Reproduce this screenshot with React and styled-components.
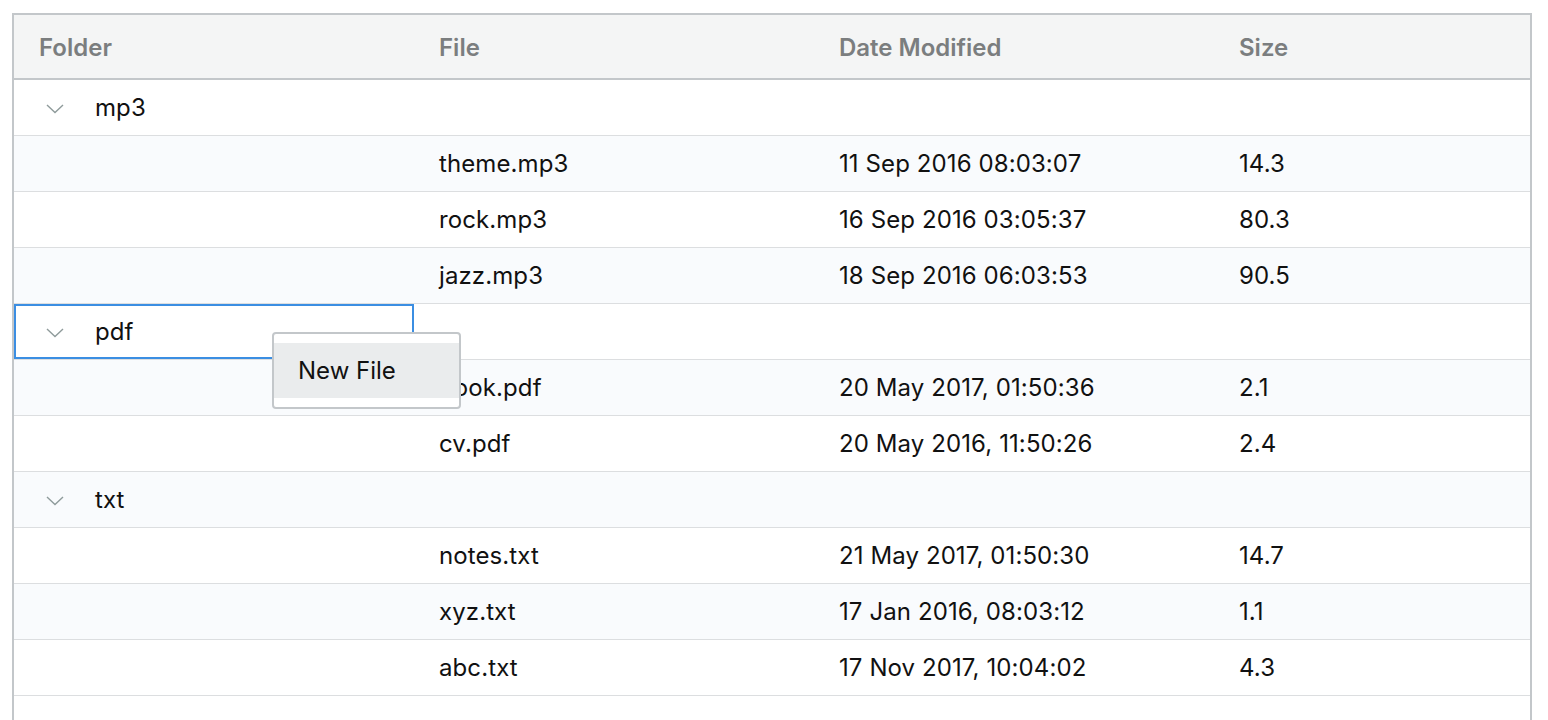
import React from "react";
import styled, { createGlobalStyle } from "styled-components";

const folders = [
  {
    name: "mp3",
    files: [
      { name: "theme.mp3", date: "11 Sep 2016 08:03:07", size: "14.3" },
      { name: "rock.mp3", date: "16 Sep 2016 03:05:37", size: "80.3" },
      { name: "jazz.mp3", date: "18 Sep 2016 06:03:53", size: "90.5" },
    ],
  },
  {
    name: "pdf",
    focused: true,
    files: [
      { name: "book.pdf", date: "20 May 2017, 01:50:36", size: "2.1" },
      { name: "cv.pdf", date: "20 May 2016, 11:50:26", size: "2.4" },
    ],
  },
  {
    name: "txt",
    files: [
      { name: "notes.txt", date: "21 May 2017, 01:50:30", size: "14.7" },
      { name: "xyz.txt", date: "17 Jan 2016, 08:03:12", size: "1.1" },
      { name: "abc.txt", date: "17 Nov 2017, 10:04:02", size: "4.3" },
    ],
  },
];

const Chevron = () => (
  <svg width="18" height="10" viewBox="0 0 18 10">
    <path d="M1 1 L9 8.5 L17 1" fill="none" stroke="#8f9b9b" strokeWidth="1.4" />
  </svg>
);

const App = () => {
  return (
    <>
      <GlobalStyle />
      <Table>
        <Header>
          <HeadCell>Folder</HeadCell>
          <HeadCell>File</HeadCell>
          <HeadCell>Date Modified</HeadCell>
          <HeadCell>Size</HeadCell>
        </Header>
        <Body>
          {folders.map((folder) => (
            <React.Fragment key={folder.name}>
              <Row>
                <FolderCell focused={folder.focused}>
                  <Chevron />
                  <span>{folder.name}</span>
                </FolderCell>
                <Cell />
                <Cell />
                <Cell />
                {folder.focused && (
                  <Menu>
                    <MenuItem>New File</MenuItem>
                  </Menu>
                )}
              </Row>
              {folder.files.map((f) => (
                <Row key={f.name}>
                  <Cell />
                  <Cell>{f.name}</Cell>
                  <Cell>{f.date}</Cell>
                  <Cell>{f.size}</Cell>
                </Row>
              ))}
            </React.Fragment>
          ))}
        </Body>
      </Table>
    </>
  );
};

export default App;

const GlobalStyle = createGlobalStyle`
  body {
    margin: 0;
    background: #fff;
    font-family: "Inter", "Liberation Sans", sans-serif;
    color: #111;
  }
`;

const Table = styled.div`
  margin: 13px 0 0 12px;
  width: 1520px;
  height: 720px;
  box-sizing: border-box;
  border: 2px solid #c3c7ca;
  border-bottom: none;
  background: #fff;
`;

const Header = styled.div`
  display: grid;
  grid-template-columns: 400px 400px 400px 1fr;
  height: 63px;
  background: #f4f5f5;
  border-bottom: 2px solid #c3c7ca;
`;

const HeadCell = styled.div`
  display: flex;
  align-items: center;
  padding-left: 25px;
  padding-top: 2px;
  font-size: 24px;
  font-weight: 600;
  color: #7b7e7f;
`;

const Body = styled.div`
  display: flex;
  flex-direction: column;
`;

const Row = styled.div`
  position: relative;
  display: grid;
  grid-template-columns: 400px 400px 400px 1fr;
  height: 56px;
  box-sizing: border-box;
  border-bottom: 1px solid #dcdee0;
  background: #fff;
  &:nth-child(even) {
    background: #f9fbfd;
  }
`;

const Cell = styled.div`
  display: flex;
  align-items: center;
  padding-left: 25px;
  font-size: 24px;
  letter-spacing: 0.1px;
  color: #111;
`;

const FolderCell = styled(Cell)`
  padding-left: 32px;
  gap: 31px;
  outline: ${(p) => (p.focused ? "2px solid #3b8ee2" : "none")};
  outline-offset: -2px;
  svg {
    margin-top: 2px;
  }
`;

const Menu = styled.div`
  position: absolute;
  left: 258px;
  top: 28px;
  z-index: 5;
  width: 189px;
  box-sizing: border-box;
  padding: 9px 0;
  background: #fff;
  border: 2px solid #c3c7ca;
  border-radius: 4px;
`;

const MenuItem = styled.div`
  height: 55px;
  display: flex;
  align-items: center;
  padding-left: 24px;
  background: #eaeced;
  font-size: 24px;
  color: #111;
`;
